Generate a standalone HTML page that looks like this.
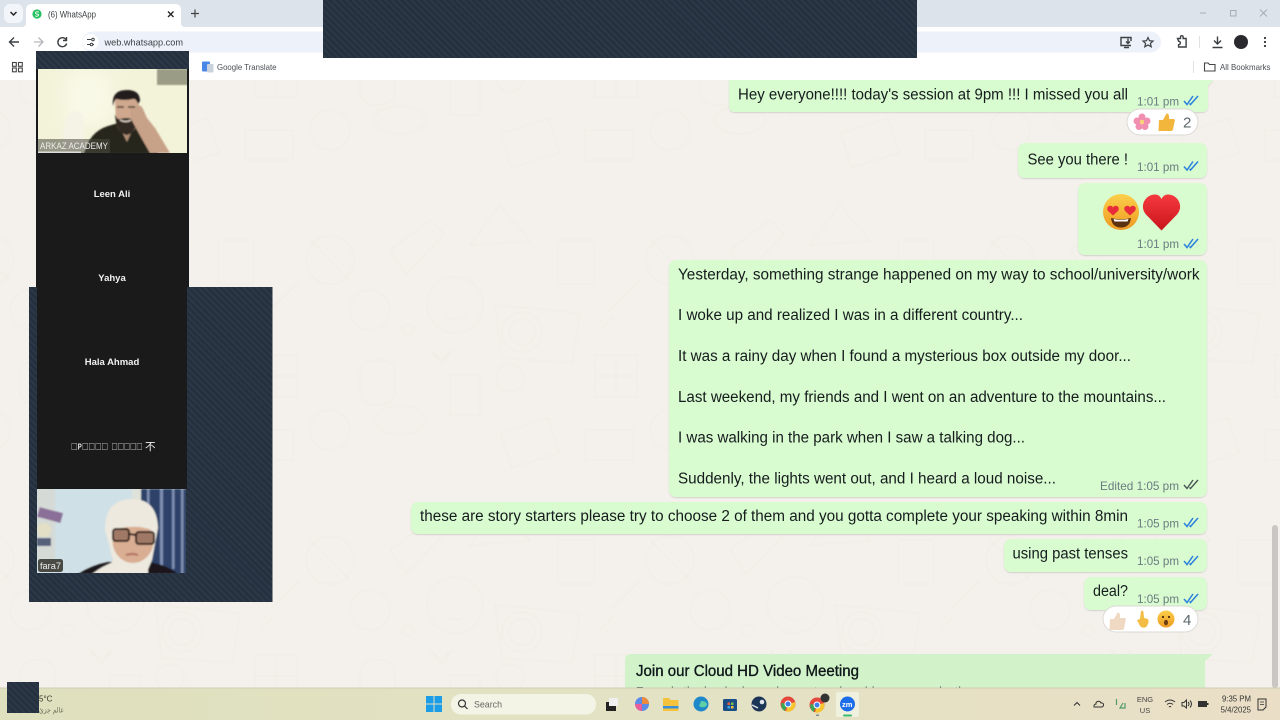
<!DOCTYPE html>
<html><head><meta charset="utf-8"><title>WhatsApp</title>
<style>
html,body{margin:0;padding:0;width:1280px;height:720px;overflow:hidden;background:#f4f1ec}
svg{display:block}
text{font-family:"Liberation Sans","Noto Sans CJK SC",sans-serif}
.m{font-size:15.5px;fill:#161c1f}
.t{font-size:12px;fill:#6b7b80}
.n{font-size:9.5px;font-weight:bold;fill:#f2f2f2}
.tick{fill:none;stroke:#2a80dc;stroke-width:1.5}
.ico{fill:none;stroke:#3c4043;stroke-width:1.4}
</style></head><body>
<svg width="1280" height="720" viewBox="0 0 1280 720" xmlns="http://www.w3.org/2000/svg">
<defs>
<pattern id="h" width="4.6" height="4.6" patternUnits="userSpaceOnUse" patternTransform="rotate(-45)">
<rect width="4.6" height="4.6" fill="#25303e"/><rect x="0" width="1.2" height="4.6" fill="#2d3a49"/><rect x="1.2" width="1" height="4.6" fill="#2a3644"/>
</pattern>
<pattern id="d" width="340" height="300" patternUnits="userSpaceOnUse" x="300" y="200">
<g fill="none" stroke="#efebe3" stroke-width="1">
<circle cx="222" cy="132" r="20"/><circle cx="222" cy="132" r="13"/><path d="M195 105l85 8-8 50-70-5z"/>
<circle cx="155" cy="105" r="28"/><path d="M145 115q10 10 22 0"/>
<path d="M90 50l40-30 14 14-38 40z"/><rect x="258" y="40" width="36" height="44" rx="4"/>
<path d="M170 45l30-40 30 36z"/><circle cx="30" cy="60" r="24"/><path d="M10 40l40 40"/>
<rect x="60" y="160" width="35" height="45" rx="14"/><path d="M150 175h30v40h-30z"/>
<circle cx="210" cy="178" r="14"/><rect x="295" y="155" width="42" height="42"/><path d="M295 176h42M316 155v42"/>
<ellipse cx="100" cy="220" rx="26" ry="14"/><rect x="205" y="225" width="50" height="36" transform="rotate(-18 230 243)"/>
<rect x="285" y="230" width="48" height="30"/><circle cx="30" cy="230" r="20"/><circle cx="108" cy="130" r="6"/><circle cx="70" cy="110" r="20"/>
<path d="M130 150l12 10 10-10-10 14z"/><path d="M310 110l30-30M300 130l14-14"/>
</g></pattern>
<filter id="b1"><feGaussianBlur stdDeviation="0.9"/></filter>
<filter id="b2" x="-40%" y="-40%" width="180%" height="180%"><feGaussianBlur stdDeviation="9"/></filter>
<filter id="b0"><feGaussianBlur stdDeviation="0.7"/></filter>
<filter id="bt"><feGaussianBlur stdDeviation="0.25"/></filter>
<filter id="sh" x="-5%" y="-10%" width="110%" height="125%"><feDropShadow dx="0" dy="1" stdDeviation=".6" flood-color="#000" flood-opacity=".13"/></filter>
<linearGradient id="tb" x1="0" x2="1" y1="0" y2="0"><stop offset="0" stop-color="#dfe0bd"/><stop offset=".5" stop-color="#e3e2c4"/><stop offset="1" stop-color="#eadfc6"/></linearGradient>
<linearGradient id="fc" x1="0" x2="0" y1="0" y2="1"><stop offset="0" stop-color="#fbd04a"/><stop offset="1" stop-color="#ee9a22"/></linearGradient>
<linearGradient id="ht" x1="0" x2="0" y1="0" y2="1"><stop offset="0" stop-color="#f53a3e"/><stop offset="1" stop-color="#c9141c"/></linearGradient>
<clipPath id="c1"><rect x="38" y="69" width="149" height="84"/></clipPath>
<clipPath id="c2"><rect x="37" y="489" width="149" height="84"/></clipPath>
<g id="tk"><path class="tick" d="M0 5l3 3.500L9 0M5.500 7.500l1 1L14 0"/></g>
</defs>

<!-- chat background -->
<rect width="1280" height="720" fill="#f4f1ec"/>
<rect width="1280" height="720" fill="url(#d)" filter="url(#b0)"/>

<!-- browser chrome -->
<rect width="1280" height="27" fill="#dde3ea"/>
<rect y="27" width="1280" height="53" fill="#fff"/>
<rect x="4" y="4" width="19" height="19" rx="6" fill="#f2f5f9"/>
<path d="M10.500 12l3 3 3-3" fill="none" stroke="#222" stroke-width="1.500"/>
<path d="M22 27q4 0 4-4V10q0-6 6-6h143q6 0 6 6v13q0 4 4 4z" fill="#fff"/>
<circle cx="37" cy="14" r="4.600" fill="#25c05f"/><path d="M38.800 12.300q-1.800-1.200-3 0t1.200 1.700 1.200 1.700-3 0" fill="none" stroke="#fff" stroke-width=".9"/>
<text x="48" y="17.500" font-size="9" fill="#3c4043" textLength="48" lengthAdjust="spacingAndGlyphs">(6) WhatsApp</text>
<path d="M168 11.500l5.500 5.500M173.500 11.500l-5.500 5.500" stroke="#222" stroke-width="1.300"/>
<path d="M191 13.500h8M195 9.500v8" stroke="#444" stroke-width="1.200"/>
<path d="M1200 13h6" stroke="#a7adb4" stroke-width="1"/>
<rect x="1230.500" y="10.500" width="5.500" height="5.500" fill="none" stroke="#a7adb4"/>
<path d="M1260 9.500l7 7M1267 9.500l-7 7" stroke="#a7adb4" stroke-width="1"/>

<rect x="82" y="31.500" width="1079" height="21" rx="10.500" fill="#edf2fa"/>
<path class="ico" d="M19 42h-9M14 37.500l-4.500 4.500 4.500 4.500"/>
<path d="M34 42h9M38.500 37.500l4.500 4.500-4.500 4.500" fill="none" stroke="#b3b6ba" stroke-width="1.300"/>
<path class="ico" d="M66 39.500a4.500 4.500 0 1 0 .7 4M66.500 37v3.500H63"/>
<circle cx="90.500" cy="42" r="8" fill="#fff"/>
<path d="M87 39.500h4M87 44.500h3M93 44.500h1" stroke="#3c4043" stroke-width="1.100"/><circle cx="93" cy="39.500" r="1.300" fill="none" stroke="#3c4043"/><circle cx="91.500" cy="44.500" r="1.300" fill="none" stroke="#3c4043"/>
<text x="104.500" y="45.500" font-size="9.500" fill="#3c4043" textLength="78.500" lengthAdjust="spacingAndGlyphs">web.whatsapp.com</text>
<path class="ico" d="M1131 41v-3.500h-10v8h10M1124 47.500h5M1128 38.500v5M1126 41.500l2 2 2-2"/>
<path d="M1148 37.500l1.500 3.200 3.500.4-2.600 2.300.8 3.400-3.200-1.800-3.200 1.800.8-3.400-2.600-2.300 3.500-.4z" fill="none" stroke="#3c4043" stroke-width="1.200"/>
<path class="ico" d="M1177.500 38.500h3v-1.500a1.300 1.300 0 0 1 2.600 0v1.500h3v8.500h-7.500v-2.300a1.300 1.300 0 0 0 0-3.500z"/>
<path d="M1199.500 36v12" stroke="#dfe1e5"/>
<path class="ico" d="M1217.500 36.500v7M1214 40.500l3.500 3.500 3.500-3.500M1212.500 47.500h10"/>
<circle cx="1241" cy="42" r="7" fill="#2a2a2e"/>
<circle cx="1265" cy="38" r="1.100" fill="#333"/><circle cx="1265" cy="42" r="1.100" fill="#333"/><circle cx="1265" cy="46" r="1.100" fill="#333"/>

<g fill="none" stroke="#444" stroke-width="1.100"><rect x="12.500" y="62.500" width="3.800" height="3.800"/><rect x="18.500" y="62.500" width="3.800" height="3.800"/><rect x="12.500" y="68" width="3.800" height="3.800"/><rect x="18.500" y="68" width="3.800" height="3.800"/></g>
<rect x="202" y="61.500" width="8" height="10" rx="1" fill="#4a85e8"/><rect x="207" y="64" width="6.500" height="8.500" rx="1" fill="#c9d2dc"/>
<text x="217" y="70" font-size="8.500" fill="#4a4f55" textLength="59.500" lengthAdjust="spacingAndGlyphs">Google Translate</text>
<path d="M1193.500 61v12" stroke="#dfe1e5"/>
<path d="M1204.500 63h3.500l1.500 1.500h5.500v6.500h-10.500z" fill="none" stroke="#444" stroke-width="1.100"/>
<text x="1220" y="70" font-size="8.500" fill="#4a4f55" textLength="50.500" lengthAdjust="spacingAndGlyphs">All Bookmarks</text>

<!-- bubbles -->
<g fill="#d8fbd0" filter="url(#sh)">
<path d="M1200 80h13l-5 6v20q0 6-6 6H735q-6 0-6-6V80z"/>
<rect x="1018" y="143" width="189" height="35" rx="7"/>
<rect x="1078" y="183" width="129" height="72" rx="7"/>
<rect x="669" y="260" width="538" height="237" rx="7"/>
<rect x="411" y="502" width="796" height="32" rx="7"/>
<rect x="1004" y="539" width="203" height="33" rx="7"/>
<rect x="1084" y="577" width="123" height="33" rx="7"/>
</g>
<path d="M631 654h582l-8 7v27H625v-28q0-6 6-6z" fill="#d2f3c9"/>

<!-- messages -->
<g filter="url(#bt)">
<text class="m" x="738" y="99.500" textLength="390" lengthAdjust="spacingAndGlyphs">Hey everyone!!!! today's session at 9pm !!! I missed you all</text>
<text class="t" x="1137" y="105.500" textLength="42" lengthAdjust="spacingAndGlyphs">1:01 pm</text>
<use href="#tk" x="1184" y="96"/>
<text class="m" x="1027.500" y="164.500" textLength="100.500" lengthAdjust="spacingAndGlyphs">See you there !</text>
<text class="t" x="1137" y="171" textLength="42" lengthAdjust="spacingAndGlyphs">1:01 pm</text>
<use href="#tk" x="1184" y="161.500"/>
<text class="t" x="1137" y="248" textLength="42" lengthAdjust="spacingAndGlyphs">1:01 pm</text>
<use href="#tk" x="1184" y="239"/>
<text class="m" x="678" y="279.500" textLength="521.500" lengthAdjust="spacingAndGlyphs">Yesterday, something strange happened on my way to school/university/work</text>
<text class="m" x="678" y="320" textLength="345" lengthAdjust="spacingAndGlyphs">I woke up and realized I was in a different country...</text>
<text class="m" x="678" y="361" textLength="453" lengthAdjust="spacingAndGlyphs">It was a rainy day when I found a mysterious box outside my door...</text>
<text class="m" x="678" y="402" textLength="488" lengthAdjust="spacingAndGlyphs">Last weekend, my friends and I went on an adventure to the mountains...</text>
<text class="m" x="678" y="442.500" textLength="347" lengthAdjust="spacingAndGlyphs">I was walking in the park when I saw a talking dog...</text>
<text class="m" x="678" y="483.500" textLength="378" lengthAdjust="spacingAndGlyphs">Suddenly, the lights went out, and I heard a loud noise...</text>
<text class="t" x="1100" y="490" textLength="79" lengthAdjust="spacingAndGlyphs">Edited 1:05 pm</text>
<path d="M1184 485l3 3.500 6-8.500M1189.500 487.500l1 1 7.500-8.500" fill="none" stroke="#4a5654" stroke-width="1.400"/>
<text class="m" x="420" y="521" textLength="708" lengthAdjust="spacingAndGlyphs">these are story starters please try to choose 2 of them and you gotta complete your speaking within 8min</text>
<text class="t" x="1137" y="527.500" textLength="42" lengthAdjust="spacingAndGlyphs">1:05 pm</text>
<use href="#tk" x="1184" y="518"/>
<text class="m" x="1012.500" y="558.500" textLength="115.500" lengthAdjust="spacingAndGlyphs">using past tenses</text>
<text class="t" x="1137" y="565" textLength="42" lengthAdjust="spacingAndGlyphs">1:05 pm</text>
<use href="#tk" x="1184" y="556"/>
<text class="m" x="1093" y="596" textLength="35" lengthAdjust="spacingAndGlyphs">deal?</text>
<text class="t" x="1137" y="603" textLength="42" lengthAdjust="spacingAndGlyphs">1:05 pm</text>
<use href="#tk" x="1184" y="594"/>
<text x="636" y="676" font-size="15.500" fill="#10161a" stroke="#10161a" stroke-width=".35" textLength="223" lengthAdjust="spacingAndGlyphs">Join our Cloud HD Video Meeting</text>
<text x="636" y="696.500" font-size="14" fill="#3a4640" textLength="345" lengthAdjust="spacingAndGlyphs">Zoom is the leader in modern enterprise video communications</text>
</g>

<!-- big emoji -->
<circle cx="1121" cy="212" r="18" fill="url(#fc)"/>
<path d="M1111 218q10 2.500 20 0q-1 9.500-10 9.500t-10-9.500z" fill="#5d3210"/>
<path d="M1113.500 219q7.500 1.500 15 0l-1 2.500h-13z" fill="#fff"/>
<path d="M1113 215.500l-5-4.500q-2-3.500 1-5 2.800-1 4 1.500 1.500-2.500 4-1.500 3 1.500 1 5zM1130 215.500l-5-4.500q-2-3.500 1-5 2.800-1 4 1.500 1.500-2.500 4-1.500 3 1.500 1 5z" fill="#e92c3a"/>
<path d="M1161.500 230.500l-15.500-16q-5-6-2-13 4-7 11-7 4.500 0 6.500 4.500 2-4.500 6.500-4.500 7 0 11 7 3 7-2 13z" fill="url(#ht)"/>

<!-- reactions -->
<rect x="1127" y="109" width="71" height="26" rx="13" fill="#fff" stroke="#dcdad5"/>
<g fill="#f18fb0"><circle cx="1142" cy="117" r="3.500"/><circle cx="1137" cy="121" r="3.500"/><circle cx="1147" cy="121" r="3.500"/><circle cx="1139" cy="126.500" r="3.500"/><circle cx="1145" cy="126.500" r="3.500"/></g><circle cx="1142" cy="122" r="2" fill="#f9d86a"/>
<path d="M1159 120h4l3.500-6.500q3-.5 2.500 5.500h5q1.500 1 .5 3l-1.500 7.500q-.5 1.500-2 1.500h-12.500z" fill="#f3b63c"/>
<text x="1183" y="127.500" font-size="15" fill="#5e686c">2</text>

<rect x="1103" y="606" width="95" height="26" rx="13" fill="#fff" stroke="#dcdad5"/>
<path d="M1110 619h4l3.500-6.500q3-.5 2.500 5.500h5q1.500 1 .5 3l-1.500 7.500q-.5 1.500-2 1.500h-12.500z" fill="#efd9c2"/>
<path d="M1140 626l-3-6 3-1 1-8q2-1 2.500 1l.5 6 4 1q1.500 3-1 7-3 3.500-7 0z" fill="#f3bd45"/>
<circle cx="1166" cy="619" r="8.500" fill="url(#fc)"/><ellipse cx="1166" cy="622.500" rx="2" ry="2.800" fill="#6b3b12"/><circle cx="1163" cy="617" r="1.100" fill="#4a2b10"/><circle cx="1169" cy="617" r="1.100" fill="#4a2b10"/>
<text x="1183" y="625" font-size="15" fill="#5e686c">4</text>

<!-- scrollbar -->
<rect x="1272" y="525" width="6" height="163" rx="3" fill="#c9c7c4"/>

<!-- taskbar -->
<rect y="688" width="1280" height="32" fill="url(#tb)"/>
<rect y="687.500" width="1280" height="1" fill="#cfcdb8"/>
<text x="39" y="701.500" font-size="8" fill="#3a3a30">5°C</text>
<text x="39" y="712.500" font-size="7.500" fill="#6a6a58" style='font-family:"DejaVu Sans",sans-serif' textLength="25" lengthAdjust="spacingAndGlyphs">عالم جزئ</text>
<g fill="#1b9de8"><rect x="426" y="696" width="7.500" height="7.500"/><rect x="434.500" y="696" width="7.500" height="7.500"/><rect x="426" y="704.500" width="7.500" height="7.500"/><rect x="434.500" y="704.500" width="7.500" height="7.500"/></g>
<rect x="451" y="694" width="145" height="20.500" rx="10" fill="#f4f4e6"/>
<circle cx="462" cy="703.500" r="3.500" fill="none" stroke="#333" stroke-width="1.200"/><path d="M464.500 706l3 3" stroke="#333" stroke-width="1.200"/>
<text x="474" y="707.500" font-size="9" fill="#666" textLength="28" lengthAdjust="spacingAndGlyphs">Search</text>
<rect x="606" y="702" width="10" height="9" fill="#222"/><rect x="609" y="698" width="9" height="8" fill="#efefef"/>
<circle cx="642" cy="704" r="7" fill="#5b8de8"/><path d="M642 697a7 7 0 0 1 7 7h-7z" fill="#ef8a3c"/><path d="M635 704a7 7 0 0 0 7 7v-7z" fill="#e85d9a"/>
<path d="M663 698h6l1.500 2h8v11h-15.500z" fill="#f5c33b"/><rect x="663" y="706" width="15.500" height="2.500" fill="#3b8fd9"/>
<circle cx="701" cy="704" r="7.500" fill="#1e88c8"/><path d="M701 701q6 0 6 4-2 3-6 2-3-1-1-3z" fill="#5fd0a5"/>
<rect x="723" y="699" width="14" height="12" rx="1.500" fill="#1a4c86"/><rect x="727.500" y="702.500" width="2.500" height="2.500" fill="#e8603c"/><rect x="731" y="702.500" width="2.500" height="2.500" fill="#7ac143"/><rect x="727.500" y="706" width="2.500" height="2.500" fill="#39a7e8"/><rect x="731" y="706" width="2.500" height="2.500" fill="#f5c33b"/>
<circle cx="759" cy="704" r="7.500" fill="#1c3556"/><circle cx="762" cy="702" r="2.300" fill="#dfe4e8"/><path d="M752 705l6 3" stroke="#dfe4e8" stroke-width="1.500"/>
<circle cx="788" cy="704" r="7.500" fill="#e4473b"/><path d="M788 704l-3.500 7a7.500 7.500 0 0 1-3-8z" fill="#3aa757"/><path d="M788 704l7-2a7.500 7.500 0 0 1-9 9.500z" fill="#f7c52e"/><circle cx="788" cy="704" r="3" fill="#3e80e8" stroke="#fff" stroke-width="1"/>
<circle cx="817" cy="705" r="7.500" fill="#e4473b"/><path d="M817 705l-3.500 7a7.500 7.500 0 0 1-3-8z" fill="#3aa757"/><path d="M817 705l7-2a7.500 7.500 0 0 1-9 9.500z" fill="#f7c52e"/><circle cx="817" cy="705" r="3" fill="#3e80e8" stroke="#fff" stroke-width="1"/><circle cx="825" cy="698" r="4.500" fill="#333"/>
<rect x="816" y="714.500" width="3" height="1.500" fill="#888"/>
<rect x="836" y="692" width="23" height="25" rx="2" fill="#f0f0df"/>
<circle cx="847.500" cy="704" r="7.500" fill="#1c6ee8"/>
<text x="842" y="707" font-size="7.500" font-weight="bold" fill="#fff">zm</text>
<rect x="843" y="714.500" width="9" height="2" rx="1" fill="#3dbb6c"/>

<path d="M1074 705.500l3-3 3 3" fill="none" stroke="#333" stroke-width="1.100"/>
<path d="M1094 707h8q2-1 1.500-3-1-1.500-2.500-1-1-2.500-3.500-1.500-2 1-1.500 2.500-2.500.5-2 3z" fill="none" stroke="#333" stroke-width="1"/>
<path d="M1116.500 699v6M1123 703l-3 5h5v-5" fill="none" stroke="#4f9a68" stroke-width="1.200"/>
<text x="1145" y="702" font-size="7.500" fill="#444" text-anchor="middle">ENG</text>
<text x="1145" y="713" font-size="7.500" fill="#444" text-anchor="middle">US</text>
<path d="M1165 702q5-4 10 0M1167 704.500q3-2.500 6 0M1169 707q1-1 2 0" fill="none" stroke="#333" stroke-width="1"/>
<path d="M1182 702.500h2l2.500-2.500v8l-2.500-2h-2zM1188 702q2 2 0 4M1190 700.500q3 3.500 0 7" fill="none" stroke="#333" stroke-width="1"/>
<rect x="1198" y="701" width="9" height="6" fill="#333"/><rect x="1207" y="703" width="1.500" height="2" fill="#333"/>
<text x="1251" y="701.500" font-size="7.800" fill="#333" text-anchor="end">9:35 PM</text>
<text x="1251" y="712.500" font-size="7.800" fill="#333" text-anchor="end">5/4/2025</text>
<path d="M1258 699h8v8l-3 3h-5z" fill="none" stroke="#333" stroke-width="1"/><path d="M1260 702h4M1260 704.500h4" stroke="#333" stroke-width=".8"/>

<!-- hatched overlays -->
<rect x="323" y="0" width="594" height="58" fill="url(#h)"/>
<rect x="7" y="682" width="32" height="31" fill="url(#h)"/>
<rect x="29" y="287" width="243.500" height="315" fill="url(#h)"/>
<rect x="36" y="51" width="153" height="236" fill="url(#h)"/>
<rect x="36" y="69" width="2" height="218" fill="#17191c"/>
<rect x="187" y="69" width="2" height="218" fill="#17191c"/>
<rect x="37" y="153" width="150" height="336" fill="#1a1a1a"/>

<!-- video tile 1 -->
<g clip-path="url(#c1)">
<rect x="37" y="69" width="151" height="85" fill="#f3f3da"/>
<rect x="66" y="72" width="44" height="52" fill="#f9f9e8" filter="url(#b2)"/>
<g filter="url(#b1)">
<path d="M157 69h31v16h-31z" fill="#9a9c86"/>
<path d="M64 150q-2-30 6-38 8-4 13 4l2 34z" fill="#f5f3e6"/>
<path d="M84 154q5-22 24-28l10-3 22 5 12 8 6 18z" fill="#26281f"/>
<path d="M118 124l17 0-8 18z" fill="#b08c74"/>
<path d="M115 102q0-12 12-12 12 0 12 10l-1 20q-2 13-11 14-10-1-11-14z" fill="#cfa88e"/>
<path d="M113 106q-2-16 14-16 13 0 13 11l-2 3q-2-6-5-5-8 2-17 0-2 2-3 7z" fill="#211d1a"/>
<path d="M115 114q2 6 5 5 7-2 12 0l5-5q1 18-10 21-11-2-12-21z" fill="#332a24"/>
<path d="M120 120q6 3 11 0" stroke="#e4d6c8" stroke-width="1.400" fill="none"/>
<path d="M136 106q5-2 7 3l4 9 8 10 15 25h-20l-8-14-11-20-1-10z" fill="#c8a288"/>
<path d="M117 107h7M128 107h7" stroke="#4a3a30" stroke-width="1.500"/>
</g></g>
<rect x="38" y="139" width="72" height="14" fill="#4a4a40" opacity=".55"/>
<rect x="38" y="151.500" width="43" height="1.500" fill="#ddd"/>
<text x="40" y="149" font-size="9" fill="#eee" textLength="68" lengthAdjust="spacingAndGlyphs">ARKAZ ACADEMY</text>

<text class="n" x="112" y="197" text-anchor="middle">Leen Ali</text>
<text class="n" x="112" y="281" text-anchor="middle">Yahya</text>
<text class="n" x="112" y="365" text-anchor="middle">Hala Ahmad</text>
<text x="71" y="449.500" font-size="8" font-weight="bold" fill="#e8e8e8" style='font-family:"Noto Sans CJK SC",sans-serif' textLength="37" lengthAdjust="spacingAndGlyphs">□P□□□□</text>
<text x="111.500" y="449.500" font-size="8" font-weight="bold" fill="#e8e8e8" style='font-family:"Noto Sans CJK SC",sans-serif' textLength="31" lengthAdjust="spacingAndGlyphs">□□□□□</text>
<text x="145" y="450" font-size="10.500" fill="#f2f2f2" style='font-family:"Noto Sans CJK SC",sans-serif'>不</text>

<!-- video tile 2 -->
<g clip-path="url(#c2)">
<rect x="37" y="489" width="150" height="85" fill="#cfe0e6"/>
<g filter="url(#b1)">
<rect x="37" y="489" width="18" height="70" fill="#d6dad6"/>
<rect x="38" y="510" width="24" height="10" fill="#8a6f98" transform="rotate(15 50 515)"/>
<circle cx="44" cy="530" r="7" fill="#e3dfc6"/><rect x="37" y="538" width="14" height="8" fill="#54607a"/>
<rect x="132" y="489" width="10" height="28" fill="#dfe2da"/>
<rect x="141" y="489" width="46" height="85" fill="#2f4369"/>
<g fill="#7e8fb2"><rect x="147" y="489" width="2.500" height="70"/><rect x="160" y="489" width="3" height="80"/><rect x="172" y="489" width="2.500" height="80"/><rect x="181" y="489" width="2.500" height="85"/></g>
<path d="M78 574q14-9 30-12h40q18 2 30 12z" fill="#1a181a"/>
<path d="M105 530q0-31 27-31 25 0 26 29l-6 32-6 14h-40l7-14z" fill="#ede9df"/>
<path d="M92 574q10-8 24-13h32v13z" fill="#ede9df"/>
<ellipse cx="133" cy="541" rx="20.500" ry="22" fill="#d9ae93"/>
<path d="M112 530q8-14 22-13 14 0 20 14-16-8-42-1z" fill="#ede9df"/>
<g fill="#5a3a30" fill-opacity=".45" stroke="#2e1a18" stroke-width="2"><rect x="113" y="529" width="16" height="12" rx="3"/><rect x="136" y="532" width="18" height="12" rx="3"/></g>
<path d="M129 534l7 1" stroke="#2e1a18" stroke-width="2"/>
<path d="M126 555q7-2 12 0" stroke="#b0705f" stroke-width="2" fill="none"/>
</g></g>
<rect x="38" y="559" width="25" height="13" rx="2.500" fill="#4a4a44"/>
<text x="40" y="569" font-size="9" fill="#eee" textLength="21" lengthAdjust="spacingAndGlyphs">fara7</text>
</svg>
</body></html>
